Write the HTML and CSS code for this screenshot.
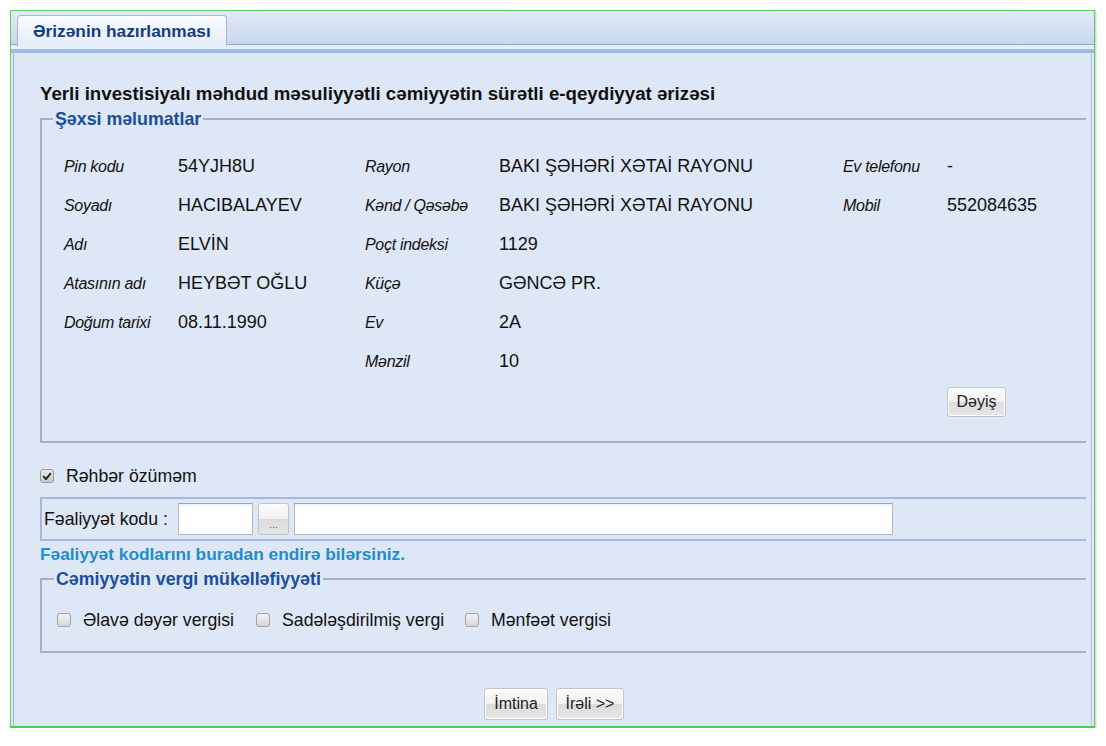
FILE: index.html
```html
<!DOCTYPE html>
<html lang="az">
<head>
<meta charset="utf-8">
<title>Ərizənin hazırlanması</title>
<link rel="stylesheet" href="styles.css">
</head>
<body>
<div class="frame">
  <div class="tabstrip">
    <div class="tab">Ərizənin hazırlanması</div>
  </div>
  <div class="band"></div>
  <div class="panel">
    <h1 class="title">Yerli investisiyalı məhdud məsuliyyətli cəmiyyətin sürətli e-qeydiyyat ərizəsi</h1>

    <fieldset class="box personal">
      <legend>Şəxsi məlumatlar</legend>
      <div class="grid">
        <span class="lbl">Pin kodu</span><span class="val">54YJH8U</span>
        <span class="lbl">Rayon</span><span class="val">BAKI ŞƏHƏRİ XƏTAİ RAYONU</span>
        <span class="lbl">Ev telefonu</span><span class="val">-</span>

        <span class="lbl">Soyadı</span><span class="val">HACIBALAYEV</span>
        <span class="lbl">Kənd / Qəsəbə</span><span class="val">BAKI ŞƏHƏRİ XƏTAİ RAYONU</span>
        <span class="lbl">Mobil</span><span class="val">552084635</span>

        <span class="lbl">Adı</span><span class="val">ELVİN</span>
        <span class="lbl">Poçt indeksi</span><span class="val">1129</span>
        <span></span><span></span>

        <span class="lbl">Atasının adı</span><span class="val">HEYBƏT OĞLU</span>
        <span class="lbl">Küçə</span><span class="val">GƏNCƏ PR.</span>
        <span></span><span></span>

        <span class="lbl">Doğum tarixi</span><span class="val">08.11.1990</span>
        <span class="lbl">Ev</span><span class="val">2A</span>
        <span></span><span></span>

        <span></span><span></span>
        <span class="lbl">Mənzil</span><span class="val">10</span>
        <span></span><span></span>

        <span class="btn-cell"><button class="btn change">Dəyiş</button></span>
      </div>
    </fieldset>

    <label class="check lead">
      <span class="cb checked"><svg viewBox="0 0 13 13" width="13" height="13"><path d="M3 6.6 L5.4 9.3 L10.2 3.4" fill="none" stroke="#222" stroke-width="2" stroke-linecap="round" stroke-linejoin="round"/></svg></span>
      <span>Rəhbər özüməm</span>
    </label>

    <div class="activity">
      <span class="act-label">Fəaliyyət kodu :</span>
      <span class="input small"></span>
      <button class="dots">...</button>
      <span class="input wide"></span>
    </div>

    <div class="link">Fəaliyyət kodlarını buradan endirə bilərsiniz.</div>

    <fieldset class="box tax">
      <legend>Cəmiyyətin vergi mükəlləfiyyəti</legend>
      <div class="tax-row">
        <label class="check"><span class="cb"></span><span>Əlavə dəyər vergisi</span></label>
        <label class="check"><span class="cb"></span><span>Sadələşdirilmiş vergi</span></label>
        <label class="check"><span class="cb"></span><span>Mənfəət vergisi</span></label>
      </div>
    </fieldset>

    <div class="actions">
      <button class="btn big cancel">İmtina</button>
      <button class="btn big next">İrəli &gt;&gt;</button>
    </div>
  </div>
</div>
</body>
</html>
```

FILE: styles.css
```css
* { box-sizing: border-box; }

html, body {
  margin: 0;
  padding: 0;
  background: #ffffff;
}

body {
  font-family: "Liberation Sans", Arial, sans-serif;
  color: #111;
}

.frame {
  margin: 10px 0 0 10px;
  width: 1085px;
  height: 718px;
  border: 1px solid #5ad35a;
  border-bottom: 2px solid #4fcf4f;
  box-shadow: 1px 1px 2px rgba(0,0,0,0.25);
  display: flex;
  flex-direction: column;
  background: #dee7f6;
}

.tabstrip {
  height: 34px;
  background: linear-gradient(#e2eaf6, #c9d8ee);
  padding: 4px 0 0 6px;
  display: flex;
  align-items: flex-start;
  border-bottom: 1px solid #93a8c8;
}

.tab {
  height: 31px;
  width: 210px;
  padding: 0 0 0 15px;
  border: 1px solid #a7b8d3;
  border-bottom: none;
  border-radius: 4px 4px 0 0;
  background: linear-gradient(#f8fbff, #e5edf9);
  font-weight: bold;
  font-size: 17.3px;
  color: #163c7e;
  line-height: 30px;
  position: relative;
  z-index: 1;
}

.band {
  height: 8px;
  background: linear-gradient(#e6eef9 0, #e6eef9 4px, #9dbbe5 4px, #9dbbe5 8px);
}

.panel {
  flex: 1;
  margin: 0 2px 0 2px;
  border-left: 1px solid #a2b2cc;
  border-right: 1px solid #b8c6dc;
  padding: 30px 5px 0 26px;
  background: #dee7f6;
}

.title {
  margin: 0;
  font-size: 18.7px;
  line-height: 22px;
  font-weight: bold;
  color: #111;
}

.box {
  margin: 0;
  padding: 0;
  border: 2px solid #a8b0bf;
  border-right: none;
  min-width: 0;
}

.box legend {
  margin-left: 11px;
  padding: 0 2px;
  font-size: 17.8px;
  line-height: 20px;
  font-weight: bold;
  color: #1b4e9c;
}

.personal {
  margin-top: 4px;
}

.grid {
  padding: 18px 0 21px 22px;
  display: grid;
  grid-template-columns: 114px 187px 134px 344px 104px 1fr;
  grid-auto-rows: 39px;
  align-items: center;
}

.lbl {
  font-style: italic;
  font-size: 16px;
  letter-spacing: -0.3px;
  color: #111;
}

.val {
  font-size: 18px;
  color: #111;
}

.btn-cell {
  grid-column: 6;
  padding-top: 3px;
}

.btn {
  font-family: "Liberation Sans", Arial, sans-serif;
  font-size: 16px;
  color: #222;
  height: 30px;
  padding: 0;
  border: 1px solid #c3c3c3;
  border-radius: 3px;
  background: linear-gradient(#fbfbfb 0, #f1f1f1 50%, #dcdcdc 51%, #e6e6e6 100%);
  box-shadow: inset 0 0 0 1px #ffffff;
}

.btn.change { width: 59px; }

.check {
  display: flex;
  align-items: center;
  font-size: 17.7px;
  line-height: 20px;
  color: #111;
}

.cb {
  width: 14px;
  height: 14px;
  border: 1px solid #a3a3a3;
  border-radius: 3px;
  background: linear-gradient(#f3f3f3, #d5d5d5);
  display: inline-flex;
  align-items: center;
  justify-content: center;
  flex: none;
}

.cb.checked {
  background: linear-gradient(#e9e9e9, #c8c8c8);
  border-color: #9a9a9a;
}

.cb svg { display: block; }

.lead {
  margin-top: 23px;
  gap: 12px;
}

.activity {
  margin-top: 11px;
  height: 44px;
  border-top: 2px solid #a6b9dd;
  border-bottom: 2px solid #a6b9dd;
  border-left: 2px solid #a6b9dd;
  display: flex;
  align-items: center;
  padding-left: 2px;
}

.act-label {
  font-size: 17.7px;
  width: 134px;
}

.input {
  height: 32px;
  background: #fff;
  border: 1px solid #b3b6be;
  border-top-color: #9fa3ab;
  box-shadow: inset 0 2px 2px rgba(0,0,0,0.06);
}

.input.small { width: 75px; }
.input.wide { width: 599px; margin-left: 5px; }

.dots {
  width: 31px;
  height: 32px;
  margin-left: 5px;
  padding: 10px 0 0;
  font-size: 11px;
  color: #666;
  border: 1px solid #c4c4c4;
  border-radius: 3px;
  background: linear-gradient(#fbfbfb 0, #f0f0f0 50%, #dcdcdc 51%, #e4e4e4 100%);
}

.link {
  margin-top: 3px;
  font-size: 17.3px;
  line-height: 20px;
  font-weight: bold;
  color: #1f8ccc;
}

.tax {
  margin-top: 5px;
}

.tax legend {
  margin-left: 12px;
}

.tax-row {
  display: flex;
  padding: 21px 0 21px 15px;
}

.tax-row .check {
  gap: 12px;
}

.tax-row .check:nth-child(1) { width: 199px; }
.tax-row .check:nth-child(2) { width: 209px; }

.actions {
  margin-top: 35px;
  display: flex;
  justify-content: center;
  gap: 8px;
  padding-right: 18px;
}

.btn.big {
  height: 32px;
  font-size: 16px;
}

.btn.cancel { width: 64px; }
.btn.next { width: 68px; }
```
